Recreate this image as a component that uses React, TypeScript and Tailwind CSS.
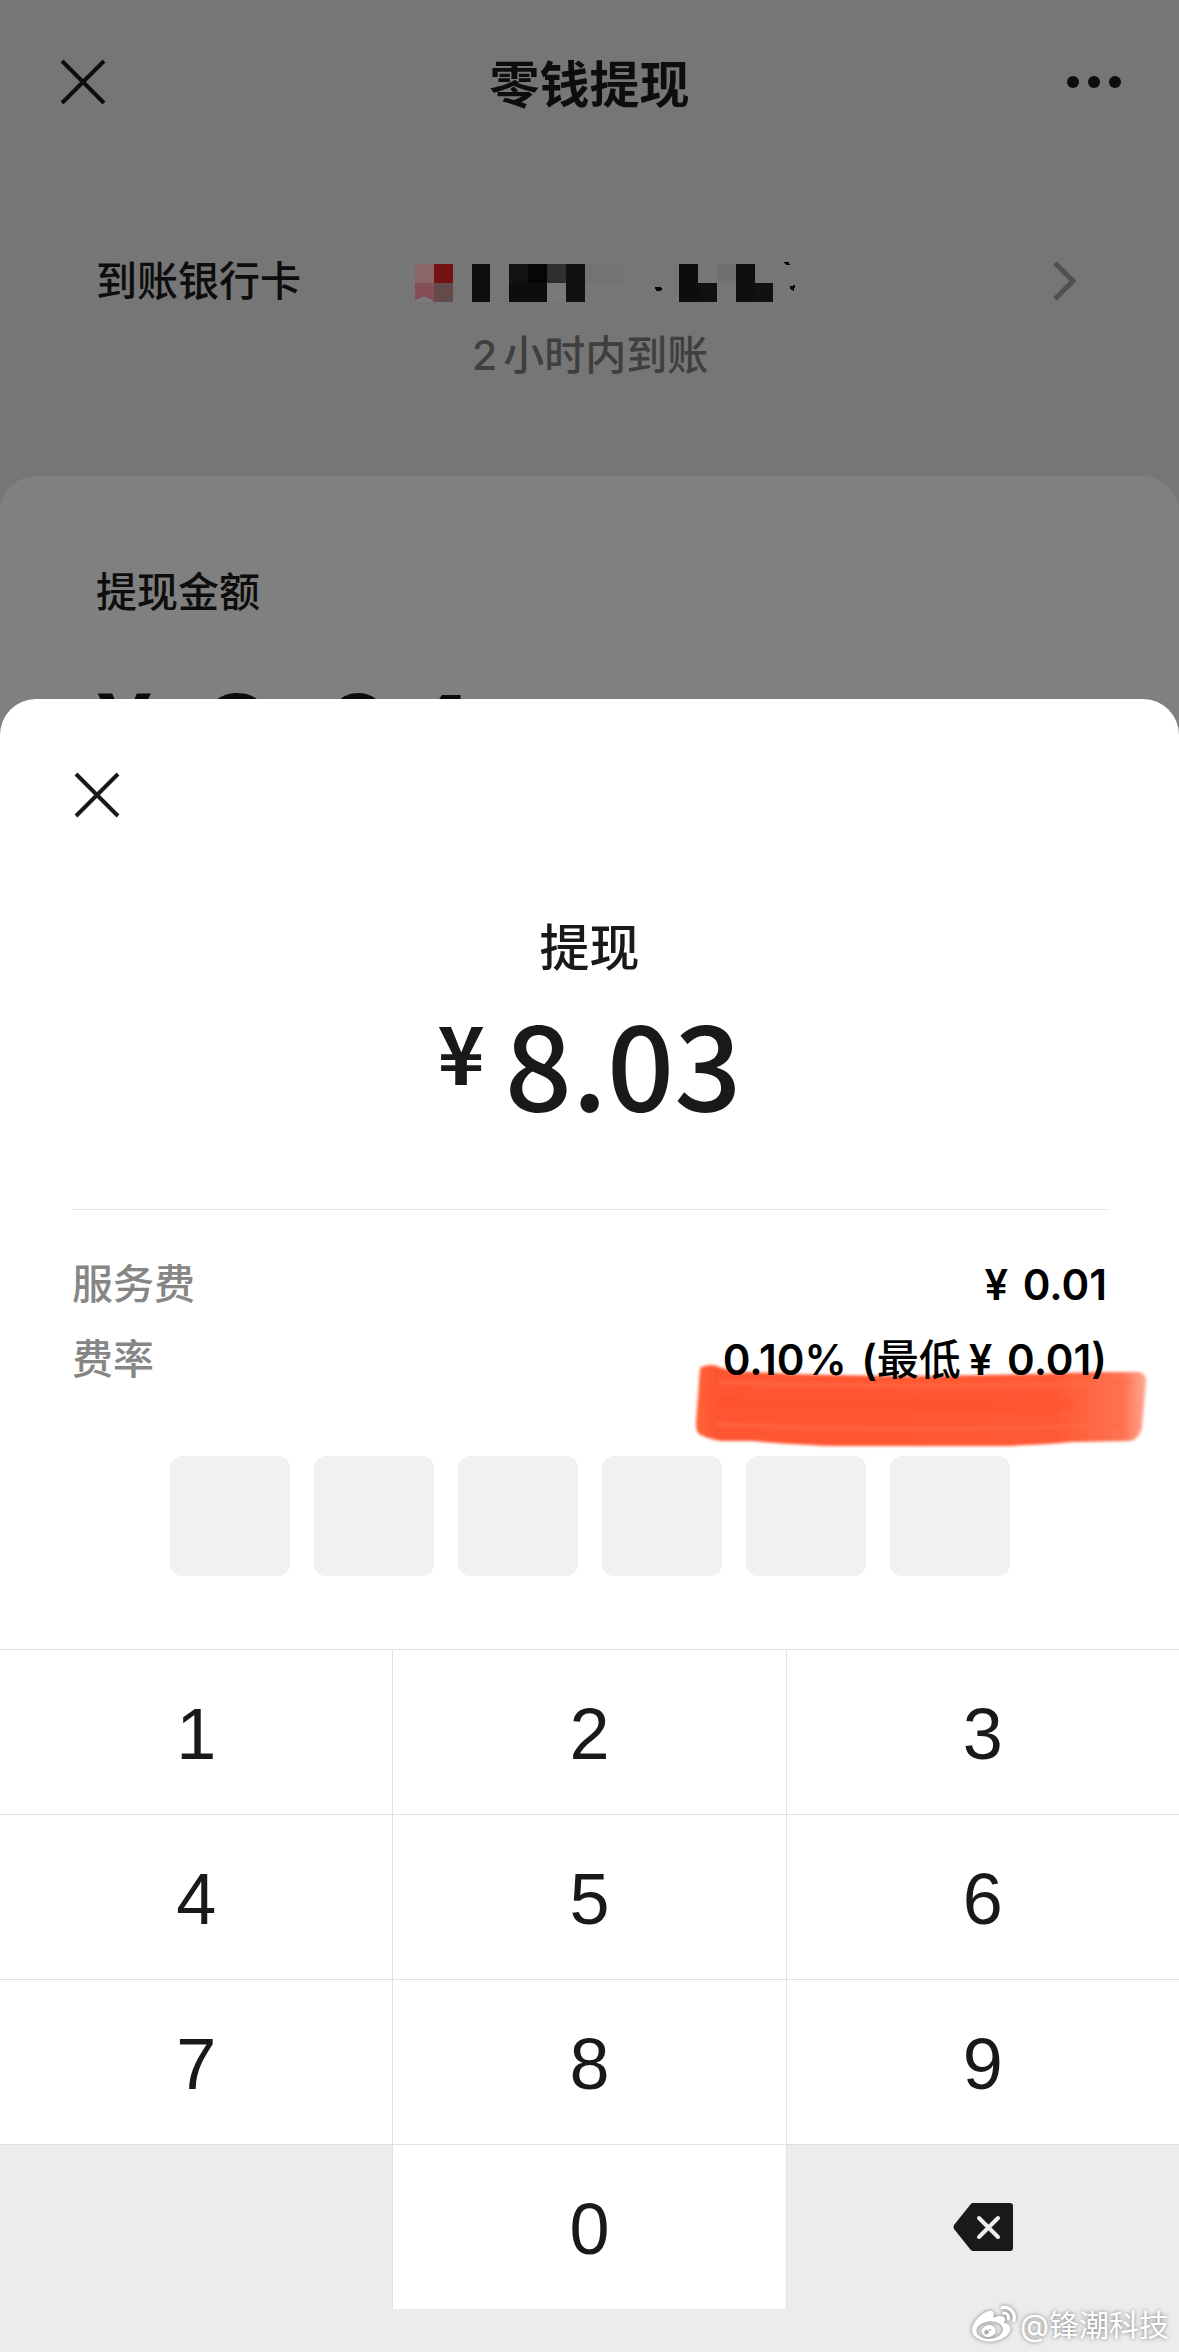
import { useState } from "react";
import { FaWeibo } from "react-icons/fa";

const PIN_LENGTH = 6;
const KEYS = ["1", "2", "3", "4", "5", "6", "7", "8", "9"];

// hidden card number, one entry per block: x, y, width, height, fill
const MOSAIC: [number, number, number, number, string][] = [
  [0, 0, 19, 19, "#8b6666"],
  [19, 0, 19, 19, "#731214"],
  [0, 19, 19, 19, "#854e59"],
  [19, 19, 19, 19, "#644b4b"],
  [57, 0, 18, 38, "#0e0e10"],
  [94, 0, 19, 19, "#131314"],
  [113, 0, 19, 19, "#060607"],
  [132, 0, 19, 19, "#2e2f2e"],
  [151, 0, 19, 38, "#111112"],
  [94, 19, 38, 19, "#0d0d0e"],
  [132, 19, 19, 19, "#797979"],
  [170, 0, 38, 19, "#737373"],
  [264, 0, 19, 38, "#0d0d0e"],
  [283, 19, 19, 19, "#0f110f"],
  [302, 0, 19, 19, "#707070"],
  [321, 0, 19, 38, "#0f0f10"],
  [340, 19, 18, 19, "#101210"],
];

function CloseIcon() {
  return (
    <svg viewBox="0 0 50 50" className="size-[50px]" fill="none" stroke="currentColor" strokeWidth="4" aria-hidden="true">
      <path d="M4 4 46 46M46 4 4 46" />
    </svg>
  );
}

function MaskedCard() {
  return (
    <svg viewBox="0 0 386 44" className="w-[386px] h-11" shapeRendering="crispEdges" role="img" aria-label="银行卡">
      <g transform="translate(0 5)">
        {MOSAIC.map(([x, y, w, h, fill]) => (
          <rect key={`${x}-${y}`} x={x} y={y} width={w} height={h} fill={fill} />
        ))}
      </g>
      <path d="M0 42q9-8 18 0v1H0z" fill="#7b7b7b" />
      <path d="M240 28h5l2 2-2 2h-4zM369 3h5l1 3h-4zM375 27l5-1-1 6-4-2z" fill="#050505" />
    </svg>
  );
}

function MarkerStroke() {
  return (
    <svg viewBox="0 0 458 90" className="absolute -right-11 top-10 w-[458px] h-[90px]" aria-hidden="true">
      <defs>
        <linearGradient id="marker" x1="0" x2="1" y1="0" y2="0">
          <stop offset="0" stopColor="#ff6238" />
          <stop offset="0.05" stopColor="#ff5530" />
          <stop offset="0.8" stopColor="#ff5934" />
          <stop offset="0.95" stopColor="#ff7352" />
          <stop offset="1" stopColor="#ffa994" />
        </linearGradient>
        <filter id="soft" x="-5%" y="-10%" width="110%" height="120%">
          <feGaussianBlur stdDeviation="1.6" />
        </filter>
      </defs>
      <g filter="url(#soft)">
        <path
          d="M7 6Q14 1 24 4Q34 9 60 10Q140 14 220 14Q320 13 400 10L446 10Q454 12 453 20L449 66Q446 78 436 79L380 80Q340 84 300 84L140 84Q90 82 60 79L28 79Q12 76 6 72Q3 70 3 60Z"
          fill="url(#marker)"
        />
        <path d="M26 20Q200 28 440 20M24 62Q220 72 430 62" fill="none" stroke="#ff6b47" strokeWidth="5" opacity="0.5" />
        <path d="M26 40Q220 46 380 42" fill="none" stroke="#ff4f28" strokeWidth="12" opacity="0.3" />
      </g>
    </svg>
  );
}

function BackspaceIcon() {
  return (
    <svg viewBox="0 0 60 48" className="w-[60px] h-12" aria-hidden="true">
      <path d="M20 0H57Q60 0 60 3V45Q60 48 57 48H20Q18 48 17 46L1 26Q0 24 1 22L17 2Q18 0 20 0Z" fill="#191919" />
      <path d="M26 15 45 34M45 15 26 34" stroke="#ededed" strokeWidth="4" strokeLinecap="round" />
    </svg>
  );
}

export default function App() {
  const [pin, setPin] = useState("");

  function press(key: string) {
    setPin((prev) => (prev.length < PIN_LENGTH ? prev + key : prev));
  }

  return (
    <div className="flex min-h-screen flex-col bg-[#767676] font-[Inter,'Noto_Sans_CJK_SC',sans-serif] text-[41px] font-medium text-[#0d0d0d]">
      <header className="grid h-[164px] grid-cols-3 items-center px-[58px]">
        <button type="button" aria-label="关闭" className="justify-self-start">
          <CloseIcon />
        </button>
        <h1 className="pt-1.5 text-center text-[50px] font-bold">零钱提现</h1>
        <button type="button" aria-label="更多" className="flex gap-[9px] justify-self-end">
          <span className="size-3 rounded-full bg-current" />
          <span className="size-3 rounded-full bg-current" />
          <span className="size-3 rounded-full bg-current" />
        </button>
      </header>

      <section className="mt-20 pr-[102px] pl-24 leading-[74px]">
        <button type="button" className="flex w-full items-center text-left">
          <span className="w-[319px]">到账银行卡</span>
          <MaskedCard />
          <svg viewBox="0 0 24 40" className="ml-auto h-10 w-6" fill="none" stroke="#4f504f" strokeWidth="5" aria-hidden="true">
            <path d="M2 2 20 20 2 38" />
          </svg>
        </button>
        <p className="pl-[376px] text-[#3f3f40]">
          <span className="mr-1.5">2</span>小时内到账
        </p>
      </section>

      <section className="mt-[84px] rounded-t-[36px] bg-[#808080] px-24 pt-[86px]">
        <h2 className="leading-[60px]">提现金额</h2>
        <p className="mt-10 flex h-[147px] items-start gap-11 font-['Noto_Sans_CJK_SC',sans-serif]">
          <span className="text-[96px] leading-[120px] font-bold">¥</span>
          <span className="text-[140px] leading-[144px]">8.04</span>
        </p>
      </section>

      <main className="-mt-[110px] flex grow flex-col rounded-t-[36px] bg-white pt-[71px] text-[#191919]">
        <div className="flex flex-col px-[72px]">
          <button type="button" aria-label="关闭" className="self-start">
            <CloseIcon />
          </button>

          <h2 className="mt-[98px] text-center text-[50px] leading-[60px]">提现</h2>
          <p className="mt-[22px] flex justify-center gap-5 font-['Noto_Sans_CJK_SC',sans-serif] leading-[120px]">
            <span className="text-[80px] leading-[100px] font-bold">¥</span>
            <span className="text-[118px]">8.03</span>
          </p>

          <dl className="mt-[89px] border-t border-[#e2e2e2] pt-[37px] leading-[75px]">
            <div className="flex justify-between">
              <dt className="text-[#868686]">服务费</dt>
              <dd className="text-[42px] font-semibold text-black">
                <span className="mr-1">¥</span> 0.01
              </dd>
            </div>
            <div className="relative flex justify-between">
              <MarkerStroke />
              <dt className="text-[#868686]">费率</dt>
              <dd className="relative text-[42px] font-semibold text-black">
                <span className="mr-1">0.10%</span> (<span className="font-medium">最低</span>
                <span className="mr-1 ml-2">¥</span> 0.01)
              </dd>
            </div>
          </dl>

          <div className="mt-[59px] flex justify-center gap-6">
            {Array.from({ length: PIN_LENGTH }, (_, i) => (
              <input
                key={i}
                type="password"
                readOnly
                aria-label={`支付密码第${i + 1}位`}
                value={pin[i] ?? ""}
                className="size-[120px] rounded-xl bg-[#f1f1f1] text-center outline-none"
              />
            ))}
          </div>
        </div>

        <div className="mt-[73px] grow bg-[#ececec]">
          <div className="grid auto-rows-[164px] grid-cols-3 gap-px bg-[#e0e0e0] pt-px font-['Liberation_Sans',sans-serif] text-[72px] font-normal">
            {KEYS.map((key) => (
              <button key={key} type="button" onClick={() => press(key)} className="bg-white pt-1">
                {key}
              </button>
            ))}
            <span className="bg-[#ececec]" />
            <button type="button" onClick={() => press("0")} className="bg-white pt-1">
              0
            </button>
            <button
              type="button"
              aria-label="删除"
              onClick={() => setPin((prev) => prev.slice(0, -1))}
              className="flex items-center justify-center bg-[#ececec]"
            >
              <BackspaceIcon />
            </button>
          </div>
          <p className="flex h-8 items-center justify-end gap-1 pr-2.5 text-[30px] font-normal text-white [text-shadow:0_0_4px_#777]">
            <FaWeibo className="size-11 drop-shadow-[0_0_2px_#777]" aria-hidden="true" />
            @锋潮科技
          </p>
        </div>
      </main>
    </div>
  );
}
